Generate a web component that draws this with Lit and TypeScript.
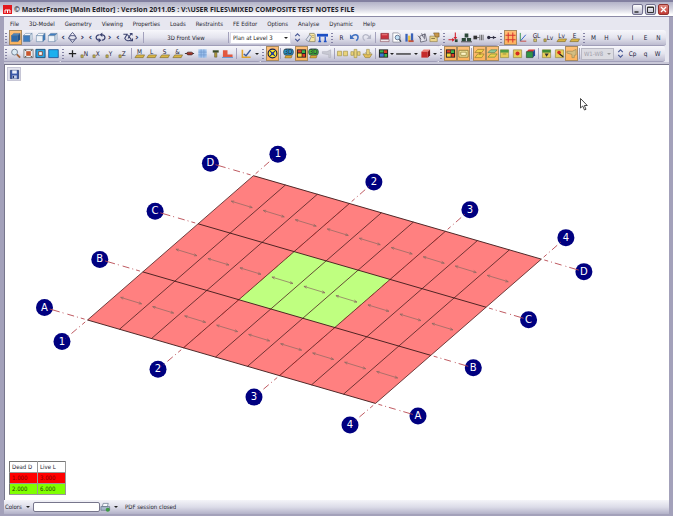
import { LitElement, html, svg, css, nothing, TemplateResult, SVGTemplateResult } from "lit";
import { customElement } from "lit/decorators.js";
import { classMap } from "lit/directives/class-map.js";
import { styleMap } from "lit/directives/style-map.js";

type Art = SVGTemplateResult;

const cube = (front: string, top: string, side: string): Art => svg`
  <path d="M1.5 4 4 1.5h7L8.5 4z" fill=${top} stroke="#4a6f96" stroke-width=".5"/>
  <path d="M8.5 4 11 1.5V8l-2.5 2.5z" fill=${side} stroke="#4a6f96" stroke-width=".5"/>
  <path d="M1.5 4h7v6.5h-7z" fill=${front} stroke="#4a6f96" stroke-width=".5"/>`;

const tag = (ch: string): Art => svg`
  <path d="M1 7.5h2.5v3H1z" fill="#c9b44a" stroke="#6b6138" stroke-width=".6"/>
  <text x="4" y="8.5" class="glyph">${ch}</text>`;

const plate = (ch: string): Art => svg`
  <text x="6" y="6.5" class="glyph mid">${ch}</text>
  <path d="M3 7.5h8.5L10 10.500H1z" fill="#d9b544" stroke="#6c5b26" stroke-width=".6"/>`;

const letter = (ch: string): Art => svg`<text x="6" y="8.5" class="glyph mid">${ch}</text>`;

const mosaic = (a: string, b: string, c: string): Art => svg`
  <path d="M1 1.5h10v9H1z" fill="#222"/>
  <path d="M2 2.5h4V5H2zM7 6.5h3v3H7z" fill=${a}/>
  <path d="M6.5 2.5H10v3H6.5z" fill=${b}/>
  <path d="M2 6h4.2v3.5H2z" fill=${c}/>`;

const panel = (inner: Art): Art => svg`
  <path d="M1.5 2h9v8.5h-9z" fill="#e8cd58" stroke="#8b8440" stroke-width=".7"/>${inner}`;

const badge3d = (bg: string): Art => svg`
  <rect x=".8" y="1" width="10.4" height="6.8" rx="2.5" fill=${bg} stroke="#1f3a44" stroke-width=".8"/>
  <text x="6" y="6.8" class="glyph mid">3D</text>
  <path d="M3 8.3h7l-1 2.5H2z" fill="#e0ad3a" stroke="#665016" stroke-width=".5"/>`;

const ICONS: Record<string, Art> = {
  solid: cube("#2f6bab", "#4b86c2", "#1e4f88"),
  front: cube("#3f7ec0", "#f4f8fc", "#e2eaf2"),
  side: cube("#eef3f8", "#f8fbfd", "#3f7ec0"),
  top: cube("#f0f4f8", "#3f7ec0", "#dfe8f0"),
  rotX: svg`<path d="M3.5 4.5C1 6 1.5 7.5 4 8M8.5 4.5C11 6 10.5 7.5 8 8" fill="none" stroke="#39406e" stroke-width="1.1"/><path d="M6 .5 9 4H3zM6 11.5 8.5 8.5h-5z" fill="#f3f3fa" stroke="#39406e" stroke-width=".9"/>`,
  rotY: svg`<path d="M5 3C0 3.5 0 8.5 5 9M7.5 3c4.5.5 4.5 5.5 0 6" fill="none" stroke="#39406e" stroke-width="1.3"/><path d="M4 6.5 7 9l-3 2.5zM8 .5 5 3l3 2.5z" fill="#39406e"/>`,
  rotZ: svg`<path d="M1.5 2.5h4L3 7c1 3 5 3 7 1.5M6 3l4 5M10 2 6.5 7" fill="none" stroke="#39406e" stroke-width="1.1"/><path d="M8 1h3.5v3zM8.5 10H12V6.5z" fill="#39406e"/>`,
  updown: svg`<path d="M3.5 4.5 6 2l2.5 2.5M3.5 7.5 6 10l2.5-2.5" fill="none" stroke="#4a5a96" stroke-width="1.3"/>`,
  pick: svg`<path d="M5 1.5h5l1 1.5v7.5H5z" fill="#f6e7a8" stroke="#77724f" stroke-width=".7"/><path d="M1 8.5 5 3l2 2-3 5.5z" fill="#dfe3ec" stroke="#66708a" stroke-width=".7"/><path d="M7 4h3M7.5 6H10" stroke="#9b8136" stroke-width=".6"/>`,
  frame: svg`<path d="M0 2h12v3H0z" fill="#1c4fc4"/><path d="M3 5v5M9 5v5M1.5 10.3h3M7.5 10.3h3" stroke="#1c4fc4" stroke-width="1.5"/>`,
  undo: svg`<path d="M3 5c4-4 8-1.5 6.5 2.5L8 9.5" fill="none" stroke="#3d6fc0" stroke-width="1.6"/><path d="M1 2.5v5h5z" fill="#3d6fc0"/>`,
  redo: svg`<path d="M9 5C5 1 1 3.5 2.5 7.5L4 9.5" fill="none" stroke="#b4b6c6" stroke-width="1.3"/><path d="M11 2.5v5H6z" fill="#b4b6c6"/>`,
  book: svg`<path d="M2 1.5h8.5v6H2z" fill="#c8323c" stroke="#7e1d28" stroke-width=".6"/><path d="M1.5 8H11v2.5H1.5z" fill="#efe6ea" stroke="#83404a" stroke-width=".6"/><path d="M3 3h6" stroke="#e88"/>`,
  preview: svg`<path d="M2 1h6l2 2v8H2z" fill="#fff" stroke="#778" stroke-width=".7"/><circle cx="7" cy="6" r="2.5" fill="#bfe0f4" stroke="#457" stroke-width=".8"/><path d="m9 8 2 2.5" stroke="#345" stroke-width="1.3"/>`,
  books: svg`<path d="M1.5 2H4v8.5H1.5z" fill="#3a62b8"/><path d="M4.5 4H7v6.5H4.5z" fill="#e9c040"/><path d="M7.5 1.5H10v9H7.5z" fill="#3a62b8"/><path d="M5 9h5.5v2H5z" fill="#c4533c"/>`,
  calc: svg`<path d="M3 4.5 9 2l1.5 7.5L4 11z" fill="#e6e6ee" stroke="#445" stroke-width=".7"/><path d="m1 4 3.5 4M5 1.5 7 6M8 2v6" stroke="#445" stroke-width=".8"/>`,
  props: svg`<path d="M1 4.5h8v6H1z" fill="#ecd58a" stroke="#8a7a4a" stroke-width=".7"/><path d="M5 1h6v4.5H7z" fill="#c8974a" stroke="#6d5326" stroke-width=".6"/><path d="M2.5 7h4" stroke="#7a6a3a"/>`,
  loadRed: svg`<path d="M8 .5v6M.5 8.5h6" stroke="#d2232f" stroke-width="1.2"/><path d="M6 5.5h4L8 8.5zM4.5 6.5v4l3-2z" fill="#d2232f"/><path d="M7.5 8h3v3h-3z" fill="#2f4838"/>`,
  blocks: svg`<path d="M4 1.5h4V6H4zM.8 6.5h4.5V10H.8zM6.5 6.5H11V10H6.5z" fill="#2d4a3a"/><path d="M0 10.7h12" stroke="#222" stroke-width=".8"/>`,
  nodeBars: svg`<path d="M.5 4h4v4h-4z" fill="#333"/><path d="M4.5 6H7M7.5 3v6M9.3 3v6M11 3v6" stroke="#555" stroke-width=".9"/>`,
  nodeLine: svg`<circle cx="3" cy="6" r="1.8" fill="#2d2d40"/><path d="M4 6h7" stroke="#2d2d40"/><path d="m7.5 4 3 2-3 2z" fill="#2d2d40"/>`,
  grid: svg`<path d="M3.5.5v11M8.5.5v11M.5 3.5h11M.5 8.5h11" stroke="#d8342c" stroke-width="1.1"/>`,
  axes: svg`<path d="M2.5 1v9" stroke="#2f8d49"/><path d="m2.5 10 6-7" stroke="#2b5cc4"/><path d="M2.5 10H9" stroke="#c5413a"/>`,
  zoom: svg`<circle cx="5" cy="4.5" r="3.2" fill="#dbeaf4" stroke="#6d7d90"/><path d="M7.5 7 11 10.5" stroke="#a4653c" stroke-width="2"/>`,
  target: svg`<path d="M1 1.5h10v9H1z" fill="#e8ecf0" stroke="#555" stroke-width=".7"/><path d="M3.5 3.5h5v5h-5z" fill="#c9562c"/><path d="M2 2.5h1.5M8.5 2.5H10M2 9.5h1.5M8.5 9.5H10" stroke="#333"/>`,
  winBlue: svg`<path d="M1 1.5h10v9H1z" fill="#2ba3e0" stroke="#1d4f78"/><path d="M4 4h4v4H4z" fill="#fff" stroke="#8a4a36"/>`,
  fill: svg`<path d="M.8 1.8h10.4v8.7H.8z" fill="#1cb0ee" stroke="#1d4f90" stroke-width=".9"/>`,
  plus: svg`<path d="M6 2.5V10M2 6.2h8" stroke="#222" stroke-width="1.4"/>`,
  tagN: tag("N"), tagX: tag("X"), tagY: tag("Y"), tagZ: tag("Z"),
  plM: plate("M"), plL: plate("L"), plS: plate("S"), plA: plate("&"), plLv: plate("Lv"), plE: plate("E"),
  gl: svg`<path d="M3 7.5h3v3H3z" fill="#d9c76a" stroke="#6b6138" stroke-width=".6"/><text x="6" y="7" class="glyph mid">GL</text>`,
  lv: tag("Lv"),
  pill: svg`<path d="M1 6h10" stroke="#333"/><rect x="3" y="4.5" width="6.5" height="3" rx="1.5" fill="#a3352b" stroke="#3a2220" stroke-width=".7"/>`,
  sheet: svg`<path d="M1.5 1.5h9v9h-9z" fill="#9cc0ec"/><path d="M4.5 1.5v9M7.5 1.5v9M1.5 4.5h9M1.5 7.5h9" stroke="#6c94cc" stroke-width=".7"/>`,
  tee: svg`<path d="M3 2.5h6.5V5H3z" fill="#3a4c28"/><path d="M5 5h2.5v5H5z" fill="#b39b38" stroke="#4a4422" stroke-width=".5"/>`,
  step: svg`<path d="M1 2.5h5V7h5.5v3H1z" fill="#e2583e"/><path d="M0 10.3h12" stroke="#5a96d8"/>`,
  sketch: svg`<path d="M1.5 2v8h9" fill="none" stroke="#e0a32c" stroke-width="1.7"/><path d="m3 6.5 2.5 2L10.5 2" fill="none" stroke="#3d5c9a" stroke-width="1.5"/>`,
  wheel: svg`<circle cx="6" cy="6" r="4.8" fill="#f8e52c" stroke="#15204c" stroke-width="1.2"/><path d="m3.500 3.500 5 5M8.500 3.500l-5 5" stroke="#1c2c70" stroke-width="1.2"/><circle cx="6" cy="6" r="1.5" fill="#2040b0"/>`,
  d3a: badge3d("#2a96c8"), d3c: badge3d("#46b836"),
  mosaicA: mosaic("#e03b24", "#39b54a", "#f0d93a"),
  mosaicB: mosaic("#39b54a", "#d93b24", "#3a78d0"),
  faded: svg`<path d="M1.5 4h5l4-2v8.5h-2V7h-2l-5-1z" fill="#c9cad4" stroke="#b0b1be" stroke-width=".7"/>`,
  pair: svg`<path d="M.5 3.5H5v5H.5zM7 3.5h4.5v5H7z" fill="#ead27a" stroke="#9f9246" stroke-width=".7"/>`,
  clamp: svg`<path d="M1 4h3v4H1zM8 4h3v4H8zM4.5 1.5h3v9h-3z" fill="#ead27a" stroke="#9f9246" stroke-width=".7"/>`,
  dish: svg`<path d="M1 6.5h10l-2.5 4h-5z" fill="#e3bd58" stroke="#8f8246" stroke-width=".7"/><path d="M5 1.5h3V5h1.5l-3 3L4 5h1z" fill="#ead27a" stroke="#8f8246" stroke-width=".6"/>`,
  line: svg`<path d="M-2 6.5h16" stroke="#333" stroke-width="1.5"/>`,
  redCube: svg`<path d="M1.5 4 4 1.5h7L8.5 4z" fill="#f07f74"/><path d="M8.5 4 11 1.5V8l-2.5 2.5z" fill="#841717"/><path d="M1.5 4h7v6.5h-7z" fill="#c52a2a"/>`,
  envelope: svg`<path d="M1 2.5h10V10H1z" fill="#f4e9a0" stroke="#8e7f40"/><path d="M3 4.5h6V8H3z" fill="#fff7c8" stroke="#8e7c34" stroke-width=".8"/>`,
  slabs: svg`<path d="M4 1.5h7L8.5 5H1zM4 6.5h7l-2.5 4H1z" fill="#f2cf4c" stroke="#9c7f2c" stroke-width=".8"/><path d="M6.5 4.5v3" stroke="#8c6f1c"/>`,
  slabs2: svg`<path d="M4 2h7L8.5 5H1z" fill="#8fc99a" stroke="#4d8258" stroke-width=".7"/><path d="M4 6.5h7L8.5 10H1z" fill="#f2cf4c" stroke="#5c8a30" stroke-width=".7"/>`,
  panelG: panel(svg`<path d="M1.5 2h9v3h-9z" fill="#4d9a45"/><path d="M4 6.5h4" stroke="#8e8b3c"/>`),
  panelR: panel(svg`<circle cx="6" cy="6" r="2.2" fill="#d52a20"/>`),
  rgb: svg`<path d="M1.5 4 4 1.5h7L8.5 4z" fill="#d73535"/><path d="M8.5 4 11 1.5V8l-2.5 2.5z" fill="#234a9c"/><path d="M1.5 4h7v6.5h-7z" fill="#2f9447" stroke="#1c3324" stroke-width=".6"/>`,
  panelD: panel(svg`<path d="M1.5 2h9v3h-9z" fill="#3d8a35"/><path d="M4 6h4.5L6 9.5z" fill="#333"/>`),
  panelE: panel(svg`<circle cx="5.5" cy="5" r="2" fill="#d52a20"/><path d="m6 6.5 4 3" stroke="#222" stroke-width="1.5"/>`),
  trumpet: svg`<path d="M1 3.5h6l4-2v6L9 8v2.5H6.500V7L1 5.5z" fill="#d3bd82" stroke="#958655" stroke-width=".7"/>`,
  save: svg`<path d="M1.5 1.5h9v9h-9z" fill="#3a58a8" stroke="#22376f" stroke-width=".8"/><path d="M3.5 1.5h5V5h-5z" fill="#e8eefa"/><path d="M3.5 7h5v3.5h-5z" fill="#c5cfe8"/><path d="M4 7.5h1.5V10H4z" fill="#22376f"/>`,
  printer: svg`<path d="M3.5 1.5H9L8 5H2.5z" fill="#f6f9fc" stroke="#5a6a80" stroke-width=".7"/><path d="M1 5h9.5v4H1z" fill="#a9b9cc" stroke="#5a6a80" stroke-width=".7"/><circle cx="8.5" cy="8.5" r="2.2" fill="#3e9a45"/>`,
};
for (const ch of ["R", "M", "H", "V", "I", "E", "N", "Cp", "q", "W"]) ICONS[`t-${ch}`] = letter(ch);

interface Seg {
  kind: "icons" | "spin" | "label" | "combo" | "caret" | "sep";
  width: number;
  names?: string[];
  on?: string[];
  text?: string;
  off?: boolean;
}
const icons = (width: number, names: string, on = ""): Seg => ({ kind: "icons", width, names: names.split(" "), on: on.split(" ") });
const sep = (width: number): Seg => ({ kind: "sep", width });
const caret = (width: number): Seg => ({ kind: "caret", width });

const ROWS: Seg[][][] = [
  [
    [
      icons(50, "solid front side top", "solid"),
      { kind: "spin", width: 82, names: ["rotX", "rotY", "rotZ"] },
      sep(4),
      { kind: "label", width: 82, text: "3D Front View" },
      sep(3),
      { kind: "combo", width: 61, text: "Plan at Level 3" },
      icons(38, "updown pick frame"),
    ],
    [icons(38, "t-R undo redo"), sep(5), icons(63, "book preview books calc props")],
    [icons(51, "loadRed blocks nodeBars nodeLine")],
    [icons(77, "grid axes gl lv plLv plE", "grid")],
    [icons(78, "t-M t-H t-V t-I t-E t-N")],
  ],
  [
    [icons(51, "zoom target winBlue fill")],
    [
      icons(64, "plus tagN tagX tagY tagZ"),
      sep(3),
      icons(101, "plM plL plS plA pill sheet tee step"),
      sep(5),
      icons(14, "sketch"),
      caret(7),
    ],
    [
      icons(13, "wheel", "wheel"),
      sep(3),
      icons(51, "d3a mosaicA d3c faded", "mosaicA"),
      sep(3),
      icons(38, "pair clamp dish"),
      sep(3),
      icons(12, "mosaicB"),
      caret(6),
      icons(17, "line"),
      caret(7),
      icons(12, "redCube"),
      caret(7),
    ],
    [
      icons(26, "mosaicA envelope", "mosaicA envelope"),
      sep(3),
      icons(64, "slabs slabs2 panelG panelR rgb", "slabs slabs2"),
      sep(3),
      icons(38, "panelD panelE trumpet", "trumpet"),
      sep(3),
      { kind: "combo", width: 33, text: "W1-W8", off: true },
      icons(50, "updown t-Cp t-q t-W"),
    ],
  ],
];

const MENU = ["File", "3D-Model", "Geometry", "Viewing", "Properties", "Loads", "Restraints", "FE Editor", "Options", "Analyse", "Dynamic", "Help"];

const drawIcon = (name: string) => html`<svg class="ico" viewBox="0 0 12 12" aria-hidden="true">${ICONS[name]}</svg>`;

const iconCss = css`
  .ico { display: block; width: 11px; height: 11px; overflow: visible; flex: none; }
  .glyph { font: 7px "DejaVu Sans Condensed", "DejaVu Sans", sans-serif; fill: #23233a; }
  .mid { text-anchor: middle; }
`;

@customElement("tool-bars")
export class ToolBars extends LitElement {
  static styles = [iconCss, css`
    :host { display: block; padding-bottom: 2px; background: #c9c8d8; }
    .row { display: flex; height: 16px; background: #e7e7f0; }
    .bar {
      display: flex; flex: none; height: 16px; box-sizing: border-box; padding-right: 1px;
      border-bottom: 1px solid #a09eb8; border-radius: 0 3px 3px 0;
      background: linear-gradient(#f7f7fb, #e4e4ee 50%, #bdbcd0);
    }
    .grip { width: 2px; margin: 3px 2px 2px 1px; background: repeating-linear-gradient(#8482a4 0 1px, transparent 1px 3px); }
    .seg { display: flex; flex: none; }
    button {
      flex: 1 1 0; min-width: 0; padding: 0; margin: 0; border: 0; background: none; color: #2e3560;
      display: flex; align-items: center; justify-content: center; font: 6px "DejaVu Sans", sans-serif;
    }
    button.on { background: linear-gradient(#ffc078, #fdb25c); box-shadow: inset 0 0 0 1px #a88a5e; }
    .sep { justify-content: center; }
    .sep::before { content: ""; width: 1px; margin: 2px 0; background: #a3a1bc; }
    .spin { align-items: center; }
    .spin button { font-size: 9px; font-weight: bold; line-height: 10px; padding-bottom: 1px; }
    .label { align-items: center; justify-content: center; }
    .caret::before { content: ""; border: 2px solid transparent; border-top-color: #222; border-bottom: 0; }
    .combo { align-items: center; position: relative; }
    select {
      appearance: none; width: 100%; height: 12px; margin: 0; padding: 0 8px 0 2px; border: 1px solid #dadae6;
      border-radius: 0; background: #fff; color: #222; font: inherit; line-height: 10px;
    }
    .combo::after {
      content: ""; position: absolute; right: 3px; top: 7px;
      border: 2px solid transparent; border-top-color: #222; border-bottom: 0;
    }
    .off select { background: #dcdce2; color: #a2a2ac; border-color: #b8b8c4; opacity: 1; }
    .off::after { border-top-color: #999; }
  `];

  private seg(s: Seg): TemplateResult {
    let body: unknown = nothing;
    if (s.kind === "icons") {
      body = s.names!.map((n) => html`<button class=${classMap({ on: s.on!.includes(n) })} aria-label=${n}>${drawIcon(n)}</button>`);
    } else if (s.kind === "spin") {
      body = s.names!.map((n) => html`<button aria-label="back">‹</button>${drawIcon(n)}<button aria-label="forward">›</button>`);
    } else if (s.kind === "label") {
      body = s.text;
    } else if (s.kind === "caret") {
      return html`<button class="caret" aria-label="more" style=${styleMap({ flex: `0 0 ${s.width}px` })}></button>`;
    } else if (s.kind === "combo") {
      body = html`<select aria-label="view" ?disabled=${!!s.off}><option>${s.text}</option></select>`;
    }
    return html`<div class=${classMap({ seg: true, [s.kind]: true, off: !!s.off })} style=${styleMap({ width: `${s.width}px` })}>${body}</div>`;
  }

  render() {
    return ROWS.map((row) => html`<div class="row" role="toolbar">
      ${row.map((bar) => html`<div class="bar"><span class="grip"></span>${bar.map((s) => this.seg(s))}</div>`)}
    </div>`);
  }
}

/* Plan geometry: u runs along a lettered line, v along a numbered one. */
const ORIGIN = [87.5, 320];
const CELL = [32, 9.27];
const BAY = [55.3, -48.1];
const at = (u: number, v: number): [number, number] => [
  ORIGIN[0] + u * CELL[0] + v * BAY[0],
  ORIGIN[1] + u * CELL[1] + v * BAY[1],
];
const quad = (u0: number, v0: number, u1: number, v1: number) =>
  [at(u0, v0), at(u1, v0), at(u1, v1), at(u0, v1)].map((p) => p.join()).join(" ");
const range = (n: number) => Array.from({ length: n }, (_, i) => i);

@customElement("floor-plan")
export class FloorPlan extends LitElement {
  static styles = css`
    :host { display: block; width: 100%; height: 100%; }
    .plan { display: block; width: 100%; height: 100%; }
    .beam { stroke: #4c2020; stroke-width: .8; }
    .main { stroke: #3c1818; stroke-width: .9; }
    .axis { stroke: #b84850; stroke-width: .9; stroke-dasharray: 0 3 4 3 1 3 7 4 1 3 20 50; }
    .over { stroke: #c81818; stroke-width: .6; stroke-dasharray: 6 5 1 5; opacity: .7; }
    .span { stroke: #8a6860; stroke-width: .7; fill: none; }
    .node { fill: #000080; }
    .name { fill: #fff; font: 10px "DejaVu Sans", sans-serif; text-anchor: middle; }
  `;

  private line(a: number[], b: number[], cls: string) {
    return svg`<line class=${cls} x1=${a[0]} y1=${a[1]} x2=${b[0]} y2=${b[1]}/>`;
  }

  private marker(p: number[], dx: number, dy: number, name: string) {
    const c = [p[0] + dx, p[1] + dy];
    return svg`
      <circle class="node" cx=${c[0]} cy=${c[1]} r="8.5"/>
      ${this.line(p, [p[0] + dx * 0.88, p[1] + dy * 0.88], "axis")}
      <text class="name" x=${c[0]} y=${c[1] + 3}>${name}</text>`;
  }

  private arrow(u: number, v: number) {
    const [x, y] = at(u + 0.5, v + 0.5);
    return svg`<path class="span" d="M${x - 10.5} ${y - 3.2}L${x + 10.5} ${y + 3.2}m-2.5-2 2.5 2-3 .2M${x - 8} ${y - 1.2}l-2.5-2 3-.2"/>`;
  }

  render() {
    return html`<svg class="plan" viewBox="5 65 664 435" role="img" aria-label="Floor plan at level 3">
      <polygon points=${quad(0, 0, 9, 3)} fill="#ff8080"/>
      <polygon points=${quad(3, 1, 6, 2)} fill="#bfff80"/>
      ${range(10).map((u) => this.line(at(u, 0), at(u, 3), "beam"))}
      ${[3, 6].map((u) => this.line(at(u, 0), at(u, 3), "over"))}
      ${range(4).map((v) => this.line(at(0, v), at(9, v), "main"))}
      ${range(3).map((v) => range(9).map((u) => this.arrow(u, v)))}
      ${["A", "B", "C", "D"].map((n, v) => [this.marker(at(0, v), -43, -12.5, n), this.marker(at(9, v), 42.5, 12.5, n)])}
      ${["1", "2", "3", "4"].map((n, i) => [this.marker(at(i * 3, 0), -25.5, 21.5, n), this.marker(at(i * 3, 3), 24.5, -21.5, n)])}
      <path d="M580.5 98.5v9.5l2.2-2 1.800 4 1.5-.7-1.700-3.800h3z" fill="#fff" stroke="#333" stroke-width=".9"/>
    </svg>`;
  }
}

@customElement("app-root")
export class AppRoot extends LitElement {
  static styles = [iconCss, css`
    :host {
      display: flex; flex-direction: column; min-height: 100vh; box-sizing: border-box;
      background: #a3a1ba; color: #24242e; font: 6px/10px "DejaVu Sans Condensed", "DejaVu Sans", sans-serif;
      padding: 0 4px 2px; overflow: hidden;
    }
    .title {
      display: flex; align-items: center; gap: 2px; height: 17px; box-sizing: border-box; margin: 0 -4px;
      padding: 1px 4px 0 3px; border-top: 2px solid #8280a0; border-bottom: 1px solid #8c8aa6;
      background: linear-gradient(#b3b3c8, #d4d4e0 50%, #fff 90%);
    }
    .logo { width: 9px; height: 9px; flex: none; display: block; }
    h1 { flex: 1; margin: 0; font: bold 7px/12px "Open Sans", "Noto Sans", sans-serif; color: #1e1e28; white-space: nowrap; overflow: hidden; }
    .win {
      width: 11px; height: 11px; padding: 0; border: 1px solid #73718f; border-radius: 2px;
      background: linear-gradient(#fff, #b9b8cc); display: block;
    }
    .close { background: linear-gradient(#e08a80, #c23a34); border-color: #93322f; }
    .win svg { display: block; width: 9px; height: 9px; }
    .body { flex: 1; display: flex; flex-direction: column; background: #e7e7f0; }
    .menu { display: flex; gap: 10px; height: 13px; align-items: center; padding: 0 6px; }
    .menu button { padding: 0; border: 0; background: none; color: inherit; font: inherit; white-space: nowrap; }
    .canvas { flex: 1; display: grid; position: relative; min-height: 0; background: #fff; border-top: 1px solid #77768c; border-left: 1px solid #77768c; }
    .save {
      position: absolute; left: 2px; top: 2px; width: 14px; height: 14px; padding: 0; border: 1px solid #c6c6d6;
      background: #e4e4ee; display: flex; align-items: center; justify-content: center;
    }
    .loads { position: absolute; left: 4px; bottom: 5px; width: 57px; border-collapse: collapse; table-layout: fixed; border: 1px solid #777; }
    .loads th, .loads td { height: 10px; padding: 0 0 0 2px; border-right: 1px solid #999; border-bottom: 1px solid #999; font-weight: normal; text-align: left; line-height: 10px; white-space: nowrap; }
    .low { background: #f00; color: #7c0000; }
    .high { background: #80ff00; color: #1e4000; }
    .status { display: flex; align-items: center; height: 14px; background: linear-gradient(#f4f4f9, #dcdce8 50%, #b2b1c8); }
    .status label { width: 18px; padding-left: 1px; }
    .down { width: 10px; padding: 0; height: 12px; border: 0; background: none; display: flex; align-items: center; justify-content: center; }
    .down::before { content: ""; border: 2px solid transparent; border-top-color: #222; border-bottom: 0; }
    .status input { width: 67px; height: 10px; box-sizing: border-box; padding: 0 2px; border: 1px solid #77768c; border-radius: 2px; background: #fff; font: inherit; }
    .print { padding: 0; border: 0; background: none; }
    .note { margin-left: 4px; }
  `];

  render() {
    return html`
      <header class="title">
        <svg class="logo" viewBox="0 0 9 9" aria-hidden="true"><path d="M0 0h9v9H0z" fill="#e3171c"/><path d="M2 8V5h5v3M4.5 5v3" fill="none" stroke="#fff"/></svg>
        <h1>© MasterFrame [Main Editor] : Version 2011.05 : V:\\USER FILES\\MIXED COMPOSITE TEST NOTES FILE</h1>
        <button class="win" aria-label="Minimize"><svg viewBox="0 0 9 9"><path d="M1.5 7h4" stroke="#333" stroke-width="1.5"/></svg></button>
        <button class="win" aria-label="Maximize"><svg viewBox="0 0 9 9"><path d="M1.5 2h6v5.5h-6zM1.5 2.5h6" fill="none" stroke="#333"/></svg></button>
        <button class="win close" aria-label="Close"><svg viewBox="0 0 9 9"><path d="m2 2 5 5M7 2 2 7" stroke="#fff" stroke-width="1.3"/></svg></button>
      </header>
      <div class="body">
        <nav class="menu">${MENU.map((m) => html`<button>${m}</button>`)}</nav>
        <tool-bars></tool-bars>
        <main class="canvas">
          <floor-plan></floor-plan>
          <button class="save" aria-label="Save">${drawIcon("save")}</button>
          <table class="loads">
            <thead><tr><th>Dead D</th><th>Live L</th></tr></thead>
            <tbody>
              <tr class="low"><td>1.000</td><td>3.000</td></tr>
              <tr class="high"><td>2.000</td><td>6.000</td></tr>
            </tbody>
          </table>
        </main>
        <footer class="status">
          <label for="colors">Colors</label>
          <button class="down" aria-label="Color list"></button>
          <input id="colors" type="text">
          <button class="print" aria-label="Print">${drawIcon("printer")}</button>
          <button class="down" aria-label="Print options"></button>
          <span class="note">PDF session closed</span>
        </footer>
      </div>`;
  }
}
